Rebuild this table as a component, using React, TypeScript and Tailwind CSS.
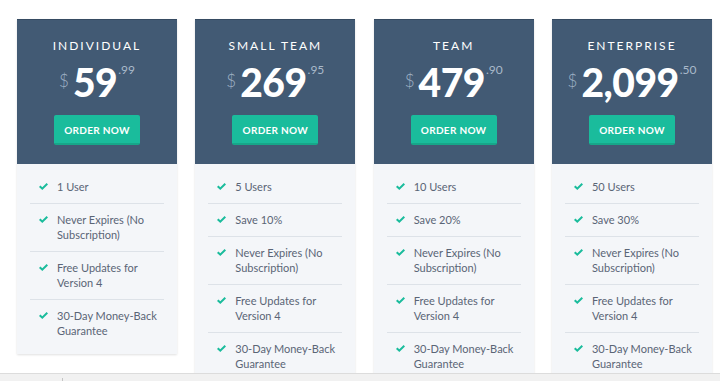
import React from "react";

type Plan = {
  name: string;
  whole: string;
  cents: string;
  features: string[];
};

const plans: Plan[] = [
  {
    name: "INDIVIDUAL",
    whole: "59",
    cents: ".99",
    features: ["1 User", "Never Expires (No Subscription)", "Free Updates for Version 4", "30-Day Money-Back Guarantee"],
  },
  {
    name: "SMALL TEAM",
    whole: "269",
    cents: ".95",
    features: ["5 Users", "Save 10%", "Never Expires (No Subscription)", "Free Updates for Version 4", "30-Day Money-Back Guarantee"],
  },
  {
    name: "TEAM",
    whole: "479",
    cents: ".90",
    features: ["10 Users", "Save 20%", "Never Expires (No Subscription)", "Free Updates for Version 4", "30-Day Money-Back Guarantee"],
  },
  {
    name: "ENTERPRISE",
    whole: "2,099",
    cents: ".50",
    features: ["50 Users", "Save 30%", "Never Expires (No Subscription)", "Free Updates for Version 4", "30-Day Money-Back Guarantee"],
  },
];

function Check() {
  return (
    <svg width="9" height="7" viewBox="0 0 9 7" className="shrink-0 mt-[4px]">
      <path d="M0 3.9 L1.4 2.5 L3.3 4.3 L7.6 0 L9 1.4 L3.3 7 Z" fill="#1abc9c" />
    </svg>
  );
}

function Card({ plan }: { plan: Plan }) {
  return (
    <div className="flex flex-col w-[160px] shadow-[0_1px_2px_rgba(0,0,0,0.12)]">
      <div className="bg-[#425a74] flex flex-col items-center pt-[19px] pb-[19px] border-t border-[#364b62]">
        <div className="text-white text-[12px] leading-[14px] tracking-[2px] font-normal" style={{ fontFamily: "Lato, sans-serif" }}>
          {plan.name}
        </div>
        <div className="flex items-start mt-[10px] h-[40px]" style={{ fontFamily: "Lato, sans-serif" }}>
          <span className="text-[#9fb1c5] text-[17px] leading-none mt-[9px] mr-[4px] font-light">$</span>
          <span className="text-white text-[39px] leading-[38px] font-black tracking-[-0.5px]">{plan.whole}</span>
          <span className="text-[#a9b9ca] text-[12px] leading-none mt-[1px] ml-[1px] font-normal">{plan.cents}</span>
        </div>
        <button
          className="mt-[12px] w-[86px] h-[30px] bg-[#1abc9c] border-b-2 border-[#17a689] rounded-[2px] text-white text-[10px] font-bold tracking-[0.3px] pt-[2px]"
          style={{ fontFamily: "Lato, sans-serif" }}
        >
          ORDER NOW
        </button>
      </div>
      <div className="bg-[#f4f6f9] px-[13px] pt-[7px] pb-[7px]">
        {plan.features.map((f, i) => (
          <div
            key={i}
            className={`flex gap-[9px] pl-[9px] pr-[4px] pt-[8px] pb-[9px] ${i < plan.features.length - 1 ? "border-b border-[#dde2e8]" : ""}`}
          >
            <Check />
            <div className="text-[#5a6576] text-[11px] leading-[15px]" style={{ fontFamily: "Lato, sans-serif" }}>
              {f}
            </div>
          </div>
        ))}
      </div>
    </div>
  );
}

export default function App() {
  return (
    <div className="w-[720px] h-[381px] flex flex-col bg-white overflow-hidden">
      <div className="flex-1 overflow-hidden">
        <div className="grid grid-cols-[160px_160px_160px_160px] gap-x-[18.33px] ml-[17px] mt-[19px] items-start">
          {plans.map((p) => (
            <Card key={p.name} plan={p} />
          ))}
        </div>
      </div>
      <div className="h-[8px] bg-[#f1f1f1] border-t border-[#dcdcdc] flex">
        <div className="ml-[62px] mt-[4px] w-px h-[4px] bg-[#c4c4c4]" />
      </div>
    </div>
  );
}
